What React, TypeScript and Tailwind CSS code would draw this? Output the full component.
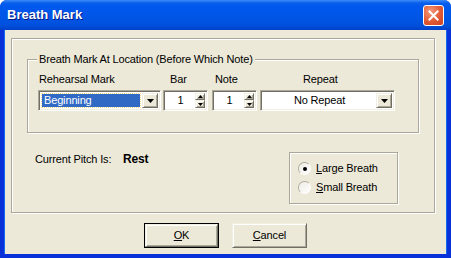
import React from "react";

const font = { fontFamily: '"Liberation Sans", Arial, sans-serif' };

function DropArrow() {
  return (
    <svg width="7" height="4" viewBox="0 0 7 4">
      <path d="M0 0h7L3.5 4z" fill="#000" />
    </svg>
  );
}

function Btn3D({ className, children }: { className?: string; children?: React.ReactNode }) {
  return (
    <div
      className={
        "flex items-center justify-center bg-[#ECE9D8] border border-t-[#F1EFE2] border-l-[#F1EFE2] border-r-[#716F64] border-b-[#716F64] shadow-[inset_1px_1px_0_#fff,inset_-1px_-1px_0_#ACA899] " +
        (className || "")
      }
    >
      {children}
    </div>
  );
}

function Sunken({ className, children }: { className?: string; children?: React.ReactNode }) {
  return (
    <div
      className={
        "flex bg-white border border-t-[#ACA899] border-l-[#ACA899] border-r-white border-b-white shadow-[inset_1px_1px_0_#716F64,inset_-1px_-1px_0_#F1EFE2] " +
        (className || "")
      }
    >
      {children}
    </div>
  );
}

function Spin() {
  return (
    <Sunken className="w-[45px] h-[21px] p-[2px]">
      <div className="flex-1 flex items-center justify-center text-[11px] text-black">1</div>
      <div className="flex flex-col w-[10px]">
        <Btn3D className="h-[8px]">
          <svg width="5" height="3" viewBox="0 0 5 3">
            <path d="M0 3h5L2.5 0z" fill="#000" />
          </svg>
        </Btn3D>
        <Btn3D className="h-[9px]">
          <svg width="5" height="3" viewBox="0 0 5 3">
            <path d="M0 0h5L2.5 3z" fill="#000" />
          </svg>
        </Btn3D>
      </div>
    </Sunken>
  );
}

function Radio({ checked, label, ul }: { checked?: boolean; label: string; ul: string }) {
  return (
    <div className="flex items-center h-[19px]">
      <div className="w-[13px] h-[13px] rounded-full border border-t-[#ACA899] border-l-[#ACA899] border-r-white border-b-white bg-gradient-to-br from-[#DCDAD0] to-white flex items-center justify-center">
        <div className="w-[11px] h-[11px] rounded-full bg-gradient-to-br from-[#EDEBE3] to-white flex items-center justify-center">
          {checked && <div className="w-[4px] h-[4px] rounded-full bg-black" />}
        </div>
      </div>
      <span className="ml-[5px] text-[11px] text-black">
        <span className="underline">{ul}</span>
        {label}
      </span>
    </div>
  );
}

export default function App() {
  return (
    <div className="w-[451px] h-[258px] flex flex-col bg-[#0831D9] rounded-t-[7px] overflow-hidden tracking-[-0.15px]" style={font}>
      {/* Title bar */}
      <div className="h-[30px] flex items-center pl-[7px] pr-[7px] bg-[linear-gradient(#3D8CF9_0%,#0A5FEA_10%,#0058EE_20%,#0055E5_60%,#0050DC_85%,#0040C8_100%)]">
        <span className="text-white font-bold text-[13px] tracking-normal [text-shadow:1px_1px_0_#0A1883]">Breath Mark</span>
        <div className="ml-auto mt-[1px] w-[21px] h-[21px] rounded-[3px] border border-white bg-[radial-gradient(circle_at_35%_30%,#F39B7D,#E25A34_55%,#C8401F)] flex items-center justify-center">
          <svg width="11" height="11" viewBox="0 0 11 11">
            <path d="M1.5 1.5l8 8M9.5 1.5l-8 8" stroke="#fff" strokeWidth="2" strokeLinecap="square" />
          </svg>
        </div>
      </div>
      {/* Client */}
      <div className="flex-1 mx-[4px] mb-[4px] bg-[#ECE9D8] flex flex-col border-x border-[#166AEE]">
        <div className="ml-[6px] mt-[8px] w-[424px] h-[175px] border border-[#ACA899] shadow-[inset_1px_1px_0_#fff,1px_1px_0_#fff] flex flex-col">
          {/* group box */}
          <div className="relative ml-[15px] mt-[20px] w-[392px] h-[74px] border border-[#ACA899] shadow-[inset_1px_1px_0_#fff,1px_1px_0_#fff] flex flex-col">
            <span className="absolute left-[9px] top-[-9px] px-[2px] bg-[#ECE9D8] text-[11px] text-black leading-[16px]">
              Breath Mark At Location (Before Which Note)
            </span>
            <div className="flex text-[11px] text-black mt-[11px] h-[16px] leading-[16px]">
              <span className="ml-[11px] w-[131px]">Rehearsal Mark</span>
              <span className="w-[45px]">Bar</span>
              <span className="w-[88px]">Note</span>
              <span>Repeat</span>
            </div>
            <div className="flex mt-[3px] ml-[10px]">
              <Sunken className="w-[123px] h-[21px] p-[2px]">
                <div className="flex-1 m-[1px] bg-[#316AC5] outline-1 outline-dotted outline-[#F6D88B] flex items-center pl-[2px] text-[11px] text-white">
                  Beginning
                </div>
                <Btn3D className="w-[16px] ml-[1px]">
                  <DropArrow />
                </Btn3D>
              </Sunken>
              <div className="ml-[2px]">
                <Spin />
              </div>
              <div className="ml-[4px]">
                <Spin />
              </div>
              <Sunken className="ml-[3px] w-[135px] h-[21px] p-[2px]">
                <div className="flex-1 flex items-center justify-center text-[11px] text-black">No Repeat</div>
                <Btn3D className="w-[16px]">
                  <DropArrow />
                </Btn3D>
              </Sunken>
            </div>
          </div>
          {/* bottom row */}
          <div className="flex mt-[19px]">
            <div className="flex ml-[23px] w-[254px] mt-[-1px] h-[16px] leading-[16px] text-[11px] text-black">
              <span className="w-[88px]">Current Pitch Is:</span>
              <span className="font-bold text-[12px]">Rest</span>
            </div>
            <div className="w-[109px] h-[52px] border border-[#ACA899] shadow-[inset_1px_1px_0_#fff,1px_1px_0_#fff] flex flex-col pl-[8px] pt-[6px]">
              <Radio checked ul="L" label="arge Breath" />
              <Radio ul="S" label="mall Breath" />
            </div>
          </div>
        </div>
        {/* Buttons */}
        <div className="flex justify-center gap-[13px] mt-[10px] text-[11px] text-black">
          <div className="w-[75px] h-[25px] border border-black">
            <Btn3D className="w-full h-full">
              <span>
                <span className="underline">O</span>K
              </span>
            </Btn3D>
          </div>
          <Btn3D className="w-[75px] h-[25px]">
            <span>
              <span className="underline">C</span>ancel
            </span>
          </Btn3D>
        </div>
      </div>
    </div>
  );
}
